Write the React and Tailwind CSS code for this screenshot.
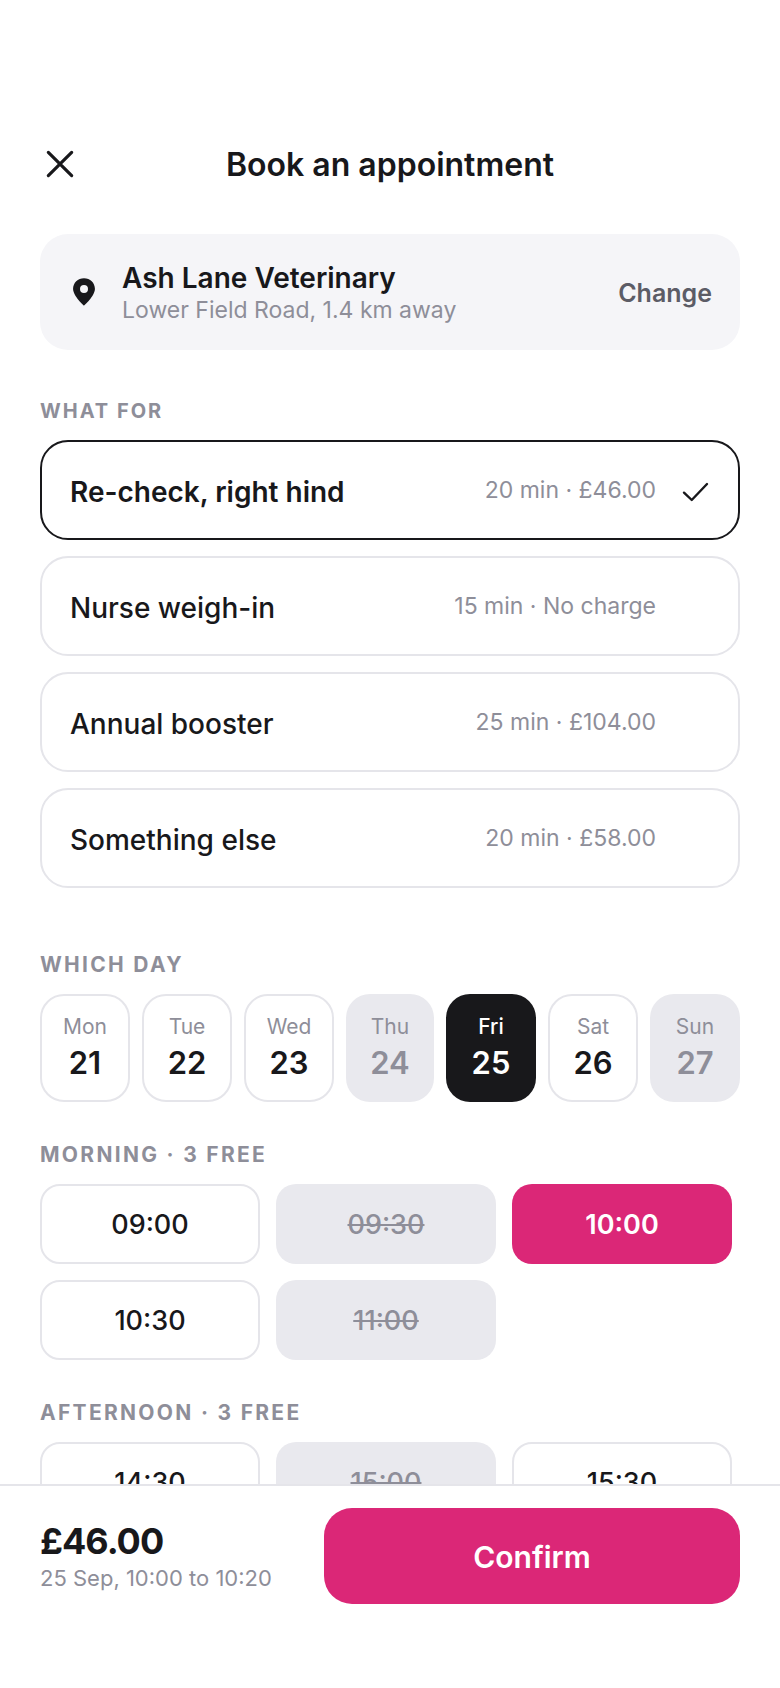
const services = [
  { name: 'Re-check, right hind', meta: '20 min · £46.00', selected: true },
  { name: 'Nurse weigh-in', meta: '15 min · No charge' },
  { name: 'Annual booster', meta: '25 min · £104.00' },
  { name: 'Something else', meta: '20 min · £58.00' },
];

const days = [
  { day: 'Mon', date: 21 },
  { day: 'Tue', date: 22 },
  { day: 'Wed', date: 23 },
  { day: 'Thu', date: 24, off: true, width: 'w-[88px]' },
  { day: 'Fri', date: 25, selected: true },
  { day: 'Sat', date: 26 },
  { day: 'Sun', date: 27, off: true },
];

const morning = [
  { time: '09:00' },
  { time: '09:30', off: true },
  { time: '10:00', selected: true },
  { time: '10:30' },
  { time: '11:00', off: true },
];

const afternoon = [
  { time: '14:30' },
  { time: '15:00', off: true },
  { time: '15:30' },
];

const Slot = ({ time, off, selected }) => {
  let tone = 'border-2 border-[#e5e5ea] bg-white text-[#18181b] font-medium';
  if (off) tone = 'bg-[#e9e9ee] text-[#8e8e99] line-through font-medium';
  if (selected) tone = 'bg-[#db2777] text-white font-semibold';
  return (
    <div className={`w-[220px] h-20 shrink-0 rounded-[20px] flex items-center justify-center pt-[2px] text-[27px] ${tone}`}>
      {time}
    </div>
  );
};

const App = () => {
  return (
    <div className="h-[1688px] flex flex-col overflow-hidden bg-white text-[#18181b] font-['Inter',sans-serif]">
      <div className="flex-1 overflow-hidden px-10 pt-[132px]">
        <div className="relative h-[64px] flex items-center justify-center">
          <svg className="absolute left-0 w-[40px] h-[40px]" viewBox="0 0 24 24" fill="none" stroke="#18181b" strokeWidth="1.9" strokeLinecap="round">
            <path d="M5 5L19 19M19 5L5 19" />
          </svg>
          <h1 className="pt-[2px] text-[32px] font-semibold">Book an appointment</h1>
        </div>

        <div className="mt-[38px] h-[116px] rounded-[28px] bg-[#f5f5f8] flex items-center px-[28px]">
          <svg className="w-[32px] h-[32px] shrink-0 -mt-[2px]" viewBox="0 0 24 24" fill="#18181b">
            <path fillRule="evenodd" d="M12 2.5C7.4 2.5 3.8 6 3.8 10.4c0 5.6 8.2 12.6 8.2 12.6s8.2-7 8.2-12.6C20.2 6 16.6 2.5 12 2.5zm0 11a3 3 0 1 1 0-6 3 3 0 0 1 0 6z" />
          </svg>
          <div className="ml-[22px] flex-1 pt-[2px]">
            <div className="text-[28px] leading-[34px] font-semibold">Ash Lane Veterinary</div>
            <div className="text-[23px] leading-[30px] text-[#8e8e99]">Lower Field Road, 1.4 km away</div>
          </div>
          <div className="pt-1 text-[25px] font-semibold text-[#5c5c66]">Change</div>
        </div>

        <div className="mt-[49px] text-[20px] leading-[24px] font-bold tracking-[2px] text-[#8e8e99]">WHAT FOR</div>
        <div className="mt-[17px] flex flex-col gap-4">
          {services.map((s) => (
            <div
              key={s.name}
              className={`h-[100px] rounded-[28px] border-2 flex items-center px-[28px] ${s.selected ? 'border-[#18181b]' : 'border-[#e5e5ea]'}`}
            >
              <div className={`flex-1 pt-1 text-[28px] ${s.selected ? 'font-semibold' : 'font-medium'}`}>{s.name}</div>
              <div className="text-[23px] text-[#8e8e99]">{s.meta}</div>
              <div className="w-[54px] flex justify-end">
                {s.selected && (
                  <svg className="w-[32px] h-[32px]" viewBox="0 0 24 24" fill="none" stroke="#18181b" strokeWidth="1.8" strokeLinecap="round" strokeLinejoin="round">
                    <path d="M4.5 14L10.3 19.5L21.75 7.5" />
                  </svg>
                )}
              </div>
            </div>
          ))}
        </div>

        <div className="mt-[65px] text-[21px] leading-[24px] font-bold tracking-[2.3px] text-[#8e8e99]">WHICH DAY</div>
        <div className="mt-[17px] flex gap-3">
          {days.map((d) => {
            let tone = 'border-2 border-[#e5e5ea] bg-white';
            if (d.off) tone = 'bg-[#e9e9ee]';
            if (d.selected) tone = 'bg-[#18181b]';
            return (
              <div key={d.day} className={`${d.width || 'w-[90px]'} h-[108px] pb-[1px] rounded-[24px] flex flex-col items-center justify-center ${tone}`}>
                <div className={`text-[21px] leading-[28px] ${d.selected ? 'text-white font-medium' : 'text-[#8e8e99]'}`}>{d.day}</div>
                <div className={`mt-[3px] text-[31px] leading-[38px] font-semibold ${d.selected ? 'text-white' : d.off ? 'text-[#8e8e99]' : 'text-[#18181b]'}`}>{d.date}</div>
              </div>
            );
          })}
        </div>

        <div className="mt-[41px] text-[21px] leading-[24px] font-bold tracking-[2.3px] text-[#8e8e99]">MORNING · 3 FREE</div>
        <div className="mt-[17px] flex flex-wrap gap-4">
          {morning.map((s) => <Slot key={s.time} {...s} />)}
        </div>

        <div className="mt-[41px] text-[21px] leading-[24px] font-bold tracking-[2.3px] text-[#8e8e99]">AFTERNOON · 3 FREE</div>
        <div className="mt-[17px] flex flex-wrap gap-4">
          {afternoon.map((s) => <Slot key={s.time} {...s} />)}
        </div>
      </div>

      <div className="h-[204px] shrink-0 border-t-2 border-[#e5e5ea] bg-white px-10 pt-[22px]">
        <div className="flex items-center justify-between">
          <div>
            <div className="text-[36px] leading-[44px] font-bold tracking-[-1px]">£46.00</div>
            <div className="text-[22px] leading-[30px] text-[#8e8e99]">25 Sep, 10:00 to 10:20</div>
          </div>
          <div className="w-[416px] h-[96px] pt-[2px] rounded-[28px] bg-[#db2777] text-white text-[30px] font-semibold flex items-center justify-center">
            Confirm
          </div>
        </div>
      </div>
    </div>
  );
};

export default App;
